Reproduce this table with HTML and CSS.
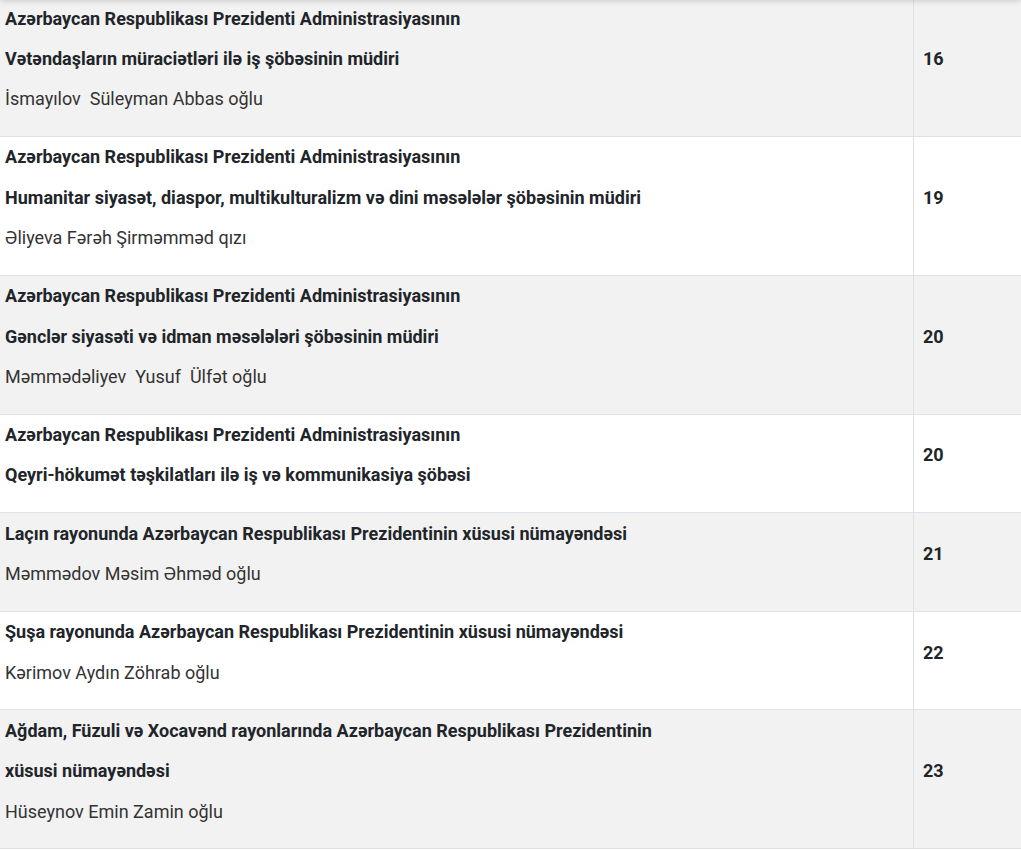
FILE: index.html
```html
<!DOCTYPE html>
<html lang="az">
<head>
<meta charset="utf-8">
<link rel="stylesheet" href="styles.css">
</head>
<body>
<div class="topshade"></div>
<table class="list">
  <tbody>
    <tr class="odd first">
      <td class="desc">
        <p class="b">Azərbaycan Respublikası Prezidenti Administrasiyasının</p>
        <p class="b">Vətəndaşların müraciətləri ilə iş şöbəsinin müdiri</p>
        <p>İsmayılov&nbsp; Süleyman Abbas oğlu</p>
      </td>
      <td class="num"><p>16</p></td>
    </tr>
    <tr>
      <td class="desc">
        <p class="b">Azərbaycan Respublikası Prezidenti Administrasiyasının</p>
        <p class="b">Humanitar siyasət, diaspor, multikulturalizm və dini məsələlər şöbəsinin müdiri</p>
        <p>Əliyeva Fərəh Şirməmməd qızı</p>
      </td>
      <td class="num"><p>19</p></td>
    </tr>
    <tr class="odd">
      <td class="desc">
        <p class="b">Azərbaycan Respublikası Prezidenti Administrasiyasının</p>
        <p class="b">Gənclər siyasəti və idman məsələləri şöbəsinin müdiri</p>
        <p>Məmmədəliyev&nbsp; Yusuf&nbsp; Ülfət oğlu</p>
      </td>
      <td class="num"><p>20</p></td>
    </tr>
    <tr>
      <td class="desc">
        <p class="b">Azərbaycan Respublikası Prezidenti Administrasiyasının</p>
        <p class="b">Qeyri-hökumət təşkilatları ilə iş və kommunikasiya şöbəsi</p>
      </td>
      <td class="num"><p>20</p></td>
    </tr>
    <tr class="odd">
      <td class="desc">
        <p class="b">Laçın rayonunda Azərbaycan Respublikası Prezidentinin xüsusi nümayəndəsi</p>
        <p>Məmmədov Məsim Əhməd oğlu</p>
      </td>
      <td class="num"><p>21</p></td>
    </tr>
    <tr>
      <td class="desc">
        <p class="b">Şuşa rayonunda Azərbaycan Respublikası Prezidentinin xüsusi nümayəndəsi</p>
        <p>Kərimov Aydın Zöhrab oğlu</p>
      </td>
      <td class="num"><p>22</p></td>
    </tr>
    <tr class="odd">
      <td class="desc">
        <p class="b">Ağdam, Füzuli və Xocavənd rayonlarında Azərbaycan Respublikası Prezidentinin</p>
        <p class="b">xüsusi nümayəndəsi</p>
        <p>Hüseynov Emin Zamin oğlu</p>
      </td>
      <td class="num"><p>23</p></td>
    </tr>
  </tbody>
</table>
</body>
</html>
```

FILE: styles.css
```css
html, body {
  margin: 0;
  padding: 0;
  background: #ffffff;
  overflow: hidden;
}
body {
  font-family: Roboto, "Liberation Sans", Arial, sans-serif;
  color: #212529;
}
.topshade {
  position: fixed;
  top: -10px;
  left: 0;
  right: 0;
  height: 10px;
  box-shadow: 0 0 7px rgba(0, 0, 0, 0.22);
  z-index: 5;
}
.list {
  width: 100%;
  border-collapse: collapse;
  margin-top: -3px;
}
.list tr {
  background: #ffffff;
}
.list tr.odd {
  background: #f2f2f2;
}
.list td {
  border-bottom: 1px solid #dee2e6;
  vertical-align: middle;
  padding: 8.5px 5px;
}
.list tr.first td {
  border-top: 1px solid #dee2e6;
}
.list td p {
  margin: 0 0 16px;
  font-size: 18px;
  line-height: 24.3px;
  color: #333333;
}
.desc {
  width: 903px;
  border-right: 1px solid #dee2e6;
}
.list td.num {
  padding-left: 9px;
  padding-right: 9px;
}
.list td.num p {
  font-weight: 700;
  color: #212529;
}
.desc p.b {
  font-weight: 700;
  color: #212529;
}
```
